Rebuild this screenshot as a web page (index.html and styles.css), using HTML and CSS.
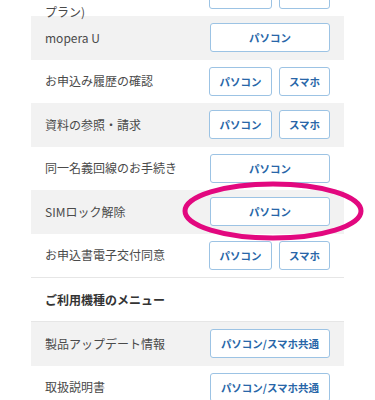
FILE: index.html
```html
<!DOCTYPE html>
<html lang="ja">
<head>
<meta charset="utf-8">
<link rel="stylesheet" href="styles.css">
</head>
<body>
<div class="page">
  <div class="list">
    <div class="row">
      <div class="label">ご契約内容の確認・変更（料金<br>プラン)</div>
      <div class="btns"><span class="btn pc">パソコン</span><span class="btn sp">スマホ</span></div>
    </div>
    <div class="row gray">
      <div class="label">mopera U</div>
      <div class="btns"><span class="btn wide">パソコン</span></div>
    </div>
    <div class="row">
      <div class="label">お申込み履歴の確認</div>
      <div class="btns"><span class="btn pc">パソコン</span><span class="btn sp">スマホ</span></div>
    </div>
    <div class="row gray">
      <div class="label">資料の参照・請求</div>
      <div class="btns"><span class="btn pc">パソコン</span><span class="btn sp">スマホ</span></div>
    </div>
    <div class="row">
      <div class="label">同一名義回線のお手続き</div>
      <div class="btns"><span class="btn wide">パソコン</span></div>
    </div>
    <div class="row gray">
      <div class="label">SIMロック解除</div>
      <div class="btns"><span class="btn wide">パソコン</span></div>
    </div>
    <div class="row">
      <div class="label">お申込書電子交付同意</div>
      <div class="btns"><span class="btn pc">パソコン</span><span class="btn sp">スマホ</span></div>
    </div>
    <div class="heading">ご利用機種のメニュー</div>
    <div class="row gray">
      <div class="label">製品アップデート情報</div>
      <div class="btns"><span class="btn wide">パソコン/スマホ共通</span></div>
    </div>
    <div class="row">
      <div class="label">取扱説明書</div>
      <div class="btns"><span class="btn wide">パソコン/スマホ共通</span></div>
    </div>
  </div>
  <svg class="circle" width="375" height="400" viewBox="0 0 375 400" xmlns="http://www.w3.org/2000/svg">
    <ellipse cx="273" cy="211" rx="88" ry="27" fill="none" stroke="#e2087f" stroke-width="5"/>
  </svg>
</div>
</body>
</html>
```
FILE: styles.css
```css
html, body {
  margin: 0;
  padding: 0;
  background: #ffffff;
}
body {
  font-family: "Noto Sans CJK JP", "Noto Sans", sans-serif;
  overflow: hidden;
  width: 375px;
  height: 400px;
}
.page {
  position: relative;
  width: 375px;
  height: 400px;
  overflow: hidden;
}
.list {
  margin: -27.5px 31px 0 31px;
  width: 313px;
}
.row {
  display: flex;
  align-items: center;
  justify-content: space-between;
  height: 43.5px;
  padding: 0 14px;
  box-sizing: border-box;
  background: #ffffff;
}
.row.gray {
  background: #f2f2f2;
}
.label {
  font-size: 12px;
  line-height: 18px;
  color: #4a4a4a;
}
.btns {
  display: flex;
  gap: 7px;
}
.btn {
  display: flex;
  align-items: center;
  justify-content: center;
  height: 29px;
  box-sizing: border-box;
  border: 1.5px solid #9cc3e4;
  border-radius: 3px;
  background: #ffffff;
  color: #2866a8;
  font-weight: bold;
  font-size: 10.5px;
}
.btn.pc { width: 63px; }
.btn.sp { width: 51px; }
.btn.wide { width: 120px; }
.heading {
  height: 45px;
  box-sizing: border-box;
  border-top: 1px solid #e6e6e6;
  border-bottom: 1px solid #e6e6e6;
  padding: 0 14px;
  display: flex;
  align-items: center;
  font-size: 12px;
  font-weight: bold;
  color: #333333;
}
.circle {
  position: absolute;
  left: 0;
  top: 0;
  pointer-events: none;
}
```
